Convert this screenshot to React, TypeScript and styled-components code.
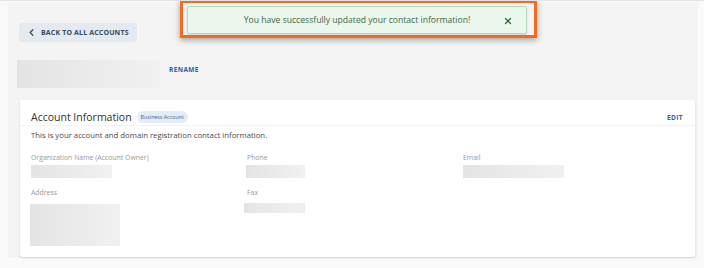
import React from "react";
import styled, { createGlobalStyle } from "styled-components";
import { ChevronLeft, X } from "lucide-react";

const GlobalStyle = createGlobalStyle`
  body {
    margin: 0;
    font-family: "Open Sans", "Liberation Sans", sans-serif;
    background-color: #fafafa;
  }
`;

const Frame = styled.div`
  position: relative;
  width: 704px;
  height: 268px;
  overflow: hidden;
  border-top: 1px solid #e2e2e2;
  box-sizing: border-box;
`;

const Page = styled.div`
  margin: 1px 6px 0 8px;
  height: 256px;
  background-color: #f4f4f4;
  padding: 21px 3px 0 11px;
  box-sizing: border-box;
  display: flex;
  flex-direction: column;
`;

const BackBtn = styled.div`
  display: inline-flex;
  align-items: center;
  align-self: flex-start;
  height: 19px;
  padding: 0 8px 0 7px;
  gap: 4px;
  background-color: #e5eaef;
  border-radius: 3px;
  color: #35495e;
  font-size: 7px;
  font-weight: 700;
  letter-spacing: 0.15px;
  cursor: pointer;
`;

const NameRow = styled.div`
  display: flex;
  align-items: center;
  margin: 18px 0 0 -2px;
  gap: 9px;
`;

const Placeholder = styled.div<{ w: number; h: number }>`
  width: ${(p) => p.w}px;
  height: ${(p) => p.h}px;
  background: linear-gradient(90deg, #e4e4e4, #f1f1f1);
`;

const LinkText = styled.span`
  color: #2d5ca6;
  font-size: 6.5px;
  font-weight: 700;
  letter-spacing: 0.4px;
  cursor: pointer;
`;

const RenameLink = styled(LinkText)`
  align-self: flex-start;
  margin-top: 5px;
`;

const Card = styled.div`
  margin: 12px 0 0 1px;
  background-color: #ffffff;
  border-radius: 3px;
  box-shadow: 0 1px 2px rgba(0, 0, 0, 0.14);
  padding-bottom: 11px;
`;

const CardHeader = styled.div`
  display: flex;
  align-items: center;
  justify-content: space-between;
  height: 25px;
  padding: 0 12px 0 11px;
  border-bottom: 1px solid #f3f3f3;
`;

const TitleWrap = styled.div`
  display: flex;
  align-items: center;
  gap: 5px;
  padding-top: 8px;
`;

const Title = styled.span`
  font-size: 10.5px;
  color: #333333;
`;

const Badge = styled.span`
  font-size: 5.3px;
  color: #3a6690;
  background-color: #e3edf5;
  border-radius: 6px;
  padding: 2px 4px;
`;

const EditLink = styled(LinkText)`
  padding-top: 10px;
`;

const Description = styled.div`
  padding: 3px 11px 0;
  font-size: 7.75px;
  line-height: 12px;
  color: #4a4a4a;
`;

const Fields = styled.div`
  display: grid;
  grid-template-columns: 216px 216px 1fr;
  row-gap: 10px;
  padding: 12px 11px 0;
`;

const Field = styled.div`
  display: flex;
  flex-direction: column;
`;

const Label = styled.span`
  font-size: 6.9px;
  line-height: 10px;
  color: #9a9a9a;
`;

const Value = styled(Placeholder)<{ dx?: number; dy?: number }>`
  margin-top: ${(p) => p.dy ?? 2}px;
  margin-left: ${(p) => p.dx ?? 0}px;
`;

const ToastFrame = styled.div`
  position: absolute;
  left: 180px;
  top: -1px;
  width: 357px;
  height: 38px;
  border: 3px solid #f36a22;
  box-sizing: border-box;
  box-shadow: 0 2px 6px rgba(0, 0, 0, 0.35);
  padding: 3px 7px 0 4px;
`;

const Toast = styled.div`
  position: relative;
  height: 28px;
  background-color: #ebf7ec;
  border: 1px solid #b4d8b9;
  box-sizing: border-box;
  border-radius: 2px;
  box-shadow: 0 1px 2px rgba(0, 0, 0, 0.12);
  display: flex;
  align-items: center;
  justify-content: center;
  font-size: 8.6px;
  color: #3b6a46;
`;

const Close = styled.span`
  position: absolute;
  right: 13px;
  top: 9px;
  display: flex;
  color: #2f6a3f;
`;

const App = () => {
  return (
    <>
      <GlobalStyle />
      <Frame>
        <Page>
          <BackBtn>
            <ChevronLeft size={11} strokeWidth={2.6} />
            BACK TO ALL ACCOUNTS
          </BackBtn>
          <NameRow>
            <Placeholder w={143} h={28} />
            <RenameLink>RENAME</RenameLink>
          </NameRow>
          <Card>
            <CardHeader>
              <TitleWrap>
                <Title>Account Information</Title>
                <Badge>Business Account</Badge>
              </TitleWrap>
              <EditLink>EDIT</EditLink>
            </CardHeader>
            <Description>
              This is your account and domain registration contact information.
            </Description>
            <Fields>
              <Field>
                <Label>Organization Name (Account Owner)</Label>
                <Value w={81} h={13} />
              </Field>
              <Field>
                <Label>Phone</Label>
                <Value w={59} h={13} dx={-1} />
              </Field>
              <Field>
                <Label>Email</Label>
                <Value w={101} h={13} />
              </Field>
              <Field>
                <Label>Address</Label>
                <Value w={90} h={42} dy={6} dx={-1} />
              </Field>
              <Field>
                <Label>Fax</Label>
                <Value w={61} h={10} dy={5} dx={-3} />
              </Field>
            </Fields>
          </Card>
        </Page>
        <ToastFrame>
          <Toast>
            You have successfully updated your contact information!
            <Close>
              <X size={10} strokeWidth={3} />
            </Close>
          </Toast>
        </ToastFrame>
      </Frame>
    </>
  );
};

export default App;
